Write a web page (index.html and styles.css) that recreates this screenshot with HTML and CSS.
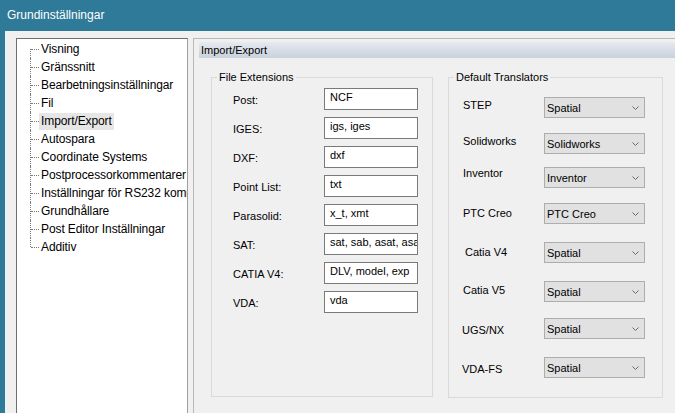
FILE: index.html
```html
<!DOCTYPE html>
<html lang="sv">
<head>
<meta charset="utf-8">
<title>Grundinställningar</title>
<link rel="stylesheet" href="styles.css">
</head>
<body>
<div class="titlebar">Grundinställningar</div>
<div class="client">
  <ul class="tree">
    <li>Visning</li>
    <li>Gränssnitt</li>
    <li>Bearbetningsinställningar</li>
    <li>Fil</li>
    <li class="selected"><span>Import/Export</span></li>
    <li>Autospara</li>
    <li>Coordinate Systems</li>
    <li>Postprocessorkommentarer</li>
    <li>Inställningar för RS232 kommunikation</li>
    <li>Grundhållare</li>
    <li>Post Editor Inställningar</li>
    <li>Additiv</li>
  </ul>
  <div class="panel">
    <div class="panel-header">Import/Export</div>
    <div class="groups">
      <fieldset class="group group-ext">
        <legend>File Extensions</legend>
        <div class="ext-grid">
          <div class="ext-label">Post:</div><div class="tb">NCF</div>
          <div class="ext-label">IGES:</div><div class="tb">igs, iges</div>
          <div class="ext-label">DXF:</div><div class="tb">dxf</div>
          <div class="ext-label">Point List:</div><div class="tb">txt</div>
          <div class="ext-label">Parasolid:</div><div class="tb">x_t, xmt</div>
          <div class="ext-label">SAT:</div><div class="tb">sat, sab, asat, asab</div>
          <div class="ext-label">CATIA V4:</div><div class="tb">DLV, model, exp</div>
          <div class="ext-label">VDA:</div><div class="tb">vda</div>
        </div>
      </fieldset>
      <fieldset class="group group-tr">
        <legend>Default Translators</legend>
        <div class="tr-grid">
          <div class="tr-label up2">STEP</div>
          <div class="sel"><span>Spatial</span><svg class="chev" width="7" height="4" viewBox="0 0 7 4"><polyline points="0.5,0.5 3.5,3.5 6.5,0.5" fill="none" stroke="#6a6a6a" stroke-width="1"/></svg></div>
          <div class="tr-label up2">Solidworks</div>
          <div class="sel"><span>Solidworks</span><svg class="chev" width="7" height="4" viewBox="0 0 7 4"><polyline points="0.5,0.5 3.5,3.5 6.5,0.5" fill="none" stroke="#6a6a6a" stroke-width="1"/></svg></div>
          <div class="tr-label up4">Inventor</div>
          <div class="sel"><span>Inventor</span><svg class="chev" width="7" height="4" viewBox="0 0 7 4"><polyline points="0.5,0.5 3.5,3.5 6.5,0.5" fill="none" stroke="#6a6a6a" stroke-width="1"/></svg></div>
          <div class="tr-label">PTC Creo</div>
          <div class="sel"><span>PTC Creo</span><svg class="chev" width="7" height="4" viewBox="0 0 7 4"><polyline points="0.5,0.5 3.5,3.5 6.5,0.5" fill="none" stroke="#6a6a6a" stroke-width="1"/></svg></div>
          <div class="tr-label indent2">Catia V4</div>
          <div class="sel"><span>Spatial</span><svg class="chev" width="7" height="4" viewBox="0 0 7 4"><polyline points="0.5,0.5 3.5,3.5 6.5,0.5" fill="none" stroke="#6a6a6a" stroke-width="1"/></svg></div>
          <div class="tr-label up1">Catia V5</div>
          <div class="sel"><span>Spatial</span><svg class="chev" width="7" height="4" viewBox="0 0 7 4"><polyline points="0.5,0.5 3.5,3.5 6.5,0.5" fill="none" stroke="#6a6a6a" stroke-width="1"/></svg></div>
          <div class="tr-label dn2 outdent1">UGS/NX</div>
          <div class="sel"><span>Spatial</span><svg class="chev" width="7" height="4" viewBox="0 0 7 4"><polyline points="0.5,0.5 3.5,3.5 6.5,0.5" fill="none" stroke="#6a6a6a" stroke-width="1"/></svg></div>
          <div class="tr-label dn2 outdent1">VDA-FS</div>
          <div class="sel"><span>Spatial</span><svg class="chev" width="7" height="4" viewBox="0 0 7 4"><polyline points="0.5,0.5 3.5,3.5 6.5,0.5" fill="none" stroke="#6a6a6a" stroke-width="1"/></svg></div>
        </div>
      </fieldset>
    </div>
  </div>
</div>
</body>
</html>
```
FILE: styles.css
```css
html, body {
  margin: 0;
  padding: 0;
  overflow: hidden;
}
body {
  width: 675px;
  height: 413px;
  background: #2e7a98;
  font-family: "Liberation Sans", Arial, sans-serif;
  color: #000;
}
.titlebar {
  height: 31px;
  line-height: 30px;
  padding-left: 7px;
  color: #fff;
  font-size: 12px;
}
.client {
  margin-left: 5px;
  height: 382px;
  box-sizing: border-box;
  background: #f0f0f0;
  display: flex;
  align-items: flex-start;
  padding: 7px 0 0 11px;
  overflow: hidden;
}
.tree {
  flex: none;
  width: 172px;
  height: 400px;
  box-sizing: border-box;
  margin: 0;
  padding: 1px 0 0 13px;
  list-style: none;
  background: #fff;
  border: 1px solid;
  border-color: #6e6e6e #a0a0a0 #a0a0a0 #6e6e6e;
  overflow: hidden;
}
.tree li {
  position: relative;
  height: 18px;
  line-height: 18px;
  font-size: 12px;
  letter-spacing: -0.1px;
  padding-left: 11px;
  white-space: nowrap;
}
.tree li::before {
  content: "";
  position: absolute;
  left: 0;
  top: 0;
  bottom: 0;
  border-left: 1px dotted #7a7a7a;
}
.tree li:first-child::before {
  top: 9px;
}
.tree li:last-child::before {
  bottom: 9px;
}
.tree li::after {
  content: "";
  position: absolute;
  left: 1px;
  top: 9px;
  width: 8px;
  border-top: 1px dotted #7a7a7a;
}
.tree li.selected span {
  display: inline-block;
  line-height: 17px;
  margin-left: -2px;
  padding: 0 2px;
  background: #e6e6e6;
}
.panel {
  flex: 1;
  height: 400px;
  margin-left: 5px;
  border-top: 1px solid #b9b9b9;
  border-left: 1px solid #b9b9b9;
  padding: 3px 0 0 5px;
}
.panel-header {
  height: 16px;
  line-height: 16px;
  padding-left: 2px;
  font-size: 11px;
  background: linear-gradient(#e6eaf0, #c9d1dc);
}
.groups {
  display: flex;
  align-items: flex-start;
  margin: 13px 0 0 12px;
}
.group {
  margin: 0;
  padding: 0;
  min-width: 0;
  box-sizing: border-box;
  border: 1px solid #dadada;
}
.group legend {
  margin-left: 5px;
  padding: 0 2px;
  font-size: 11px;
  line-height: 13px;
}
.group-ext {
  width: 222px;
  height: 326px;
}
.group-tr {
  width: 215px;
  height: 327px;
  margin-left: 15px;
}
.ext-grid {
  display: grid;
  grid-template-columns: 91px 94px;
  row-gap: 7px;
  padding: 4px 0 0 21px;
}
.ext-label {
  height: 22px;
  box-sizing: border-box;
  padding-top: 2px;
  line-height: 20px;
  font-size: 11px;
  white-space: nowrap;
}
.tb {
  height: 22px;
  box-sizing: border-box;
  border: 1px solid #7a7a7a;
  background: #fff;
  padding: 2px 2px 0 5px;
  font-size: 11px;
  line-height: 13px;
  white-space: nowrap;
  overflow: hidden;
}
.tr-grid {
  display: grid;
  grid-template-columns: 81px 101px;
  grid-template-rows: 36px 34px 36px 39px 39px 37px 39px 21px;
  padding: 13px 0 0 14px;
}
.tr-label {
  font-size: 11px;
  line-height: 21px;
  white-space: nowrap;
}
.up1 { margin-top: -1px; }
.up2 { margin-top: -2px; }
.up4 { margin-top: -4px; }
.dn2 { margin-top: 2px; }
.indent2 { margin-left: 2px; }
.outdent1 { margin-left: -1px; }
.sel {
  height: 21px;
  box-sizing: border-box;
  border: 1px solid #adadad;
  background: #e1e1e1;
  display: flex;
  align-items: center;
  justify-content: space-between;
  padding: 1px 5px 0 2px;
  font-size: 11px;
  white-space: nowrap;
}
.chev {
  display: block;
  flex: none;
}
```
